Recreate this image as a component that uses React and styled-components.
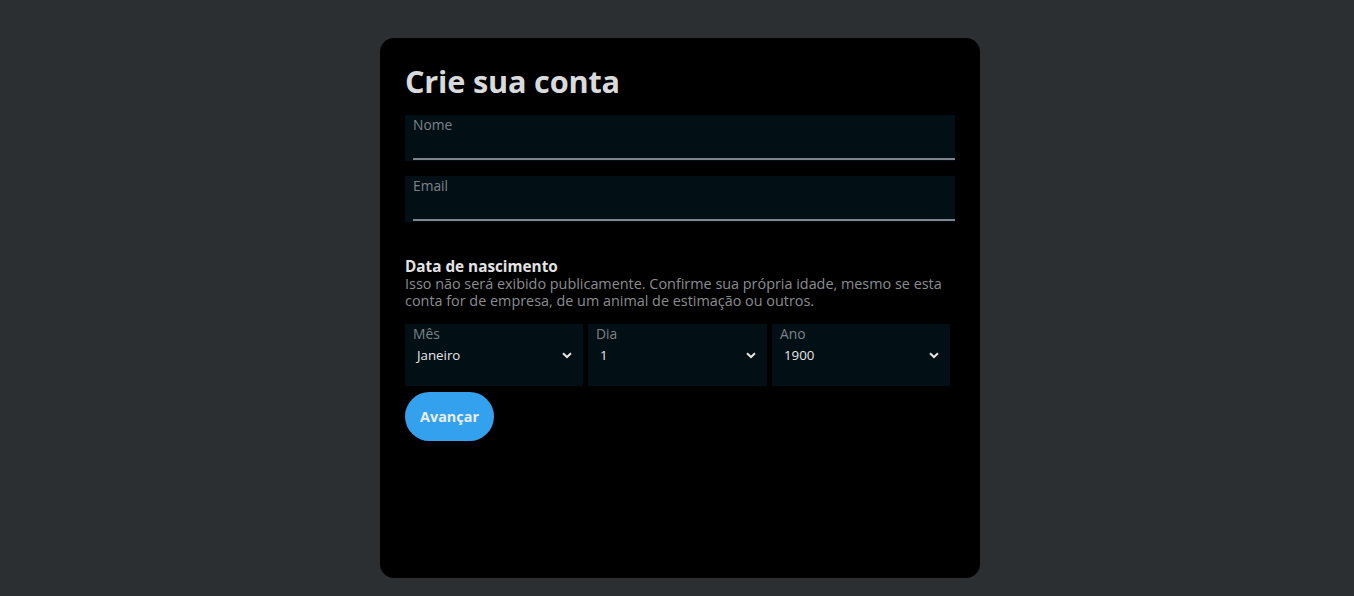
import React from 'react';
import styled, { createGlobalStyle } from 'styled-components';

const GlobalStyle = createGlobalStyle`
	* { box-sizing: border-box; }
	body {
		margin: 0;
		background: #2c2f32;
		font-family: 'Open Sans', 'Noto Sans', sans-serif;
	}
`;

const Page = styled.div`
	min-height: 596px;
	display: flex;
	justify-content: center;
	padding: 38px 0 0 6px;
`;

const Card = styled.div`
	width: 600px;
	height: 540px;
	background: #000;
	border-radius: 14px;
	padding: 20px 25px;
	display: flex;
	flex-direction: column;
`;

const Title = styled.h1`
	margin: 0 0 11px;
	font-size: 30.7px;
	line-height: 46px;
	font-weight: 700;
	color: #d9dadb;
	letter-spacing: -0.2px;
`;

const Field = styled.label`
	display: flex;
	flex-direction: column;
	width: 550px;
	height: 46px;
	background: #020f15;
	padding: 1px 0 0 8px;
	margin-bottom: ${(p) => p.$gap || 0}px;
`;

const Label = styled.span`
	font-size: 13.8px;
	line-height: 18px;
	color: #7d8388;
`;

const TextInput = styled.input`
	flex: 1;
	background: transparent;
	border: none;
	border-bottom: 2px solid #7e858c;
	margin-bottom: 3px;
	outline: none;
	color: #e5e5e5;
	font: inherit;
`;

const SectionTitle = styled.h2`
	margin: 0;
	font-size: 15.3px;
	line-height: 18px;
	font-weight: 700;
	color: #e3e3e3;
`;

const Hint = styled.p`
	margin: 0 0 15px;
	font-size: 14.4px;
	line-height: 17px;
	color: #8a8d90;
	width: 545px;
`;

const SelectRow = styled.div`
	display: grid;
	grid-template-columns: 178px 179px 178px;
	gap: 5px;
	margin-bottom: 6px;
`;

const SelectBox = styled.div`
	height: 62px;
	background: #020f15;
	padding: 1px 11px 0 8px;
	display: flex;
	flex-direction: column;
`;

const SelectValue = styled.div`
	display: flex;
	align-items: center;
	justify-content: space-between;
	padding-left: 4px;
	margin-top: 3px;
	font-size: 13.3px;
	color: #e6e6e6;
`;

const Chevron = () => (
	<svg width="10" height="7" viewBox="0 0 10 7">
		<path d="M1 1.2 L5 5 L9 1.2" fill="none" stroke="#e6e6e6" strokeWidth="2" />
	</svg>
);

const Button = styled.button`
	align-self: flex-start;
	width: 89px;
	height: 49px;
	border: none;
	border-radius: 25px;
	background: #34a1ef;
	color: #e8eef3;
	font: inherit;
	font-size: 14.4px;
	font-weight: 700;
`;

function Select({ label, value }) {
	return (
		<SelectBox>
			<Label>{label}</Label>
			<SelectValue>
				{value}
				<Chevron />
			</SelectValue>
		</SelectBox>
	);
}

export default function App() {
	return (
		<>
			<GlobalStyle />
			<Page>
				<Card>
					<Title>Crie sua conta</Title>
					<Field $gap={15}>
						<Label>Nome</Label>
						<TextInput />
					</Field>
					<Field $gap={35}>
						<Label>Email</Label>
						<TextInput />
					</Field>
					<SectionTitle>Data de nascimento</SectionTitle>
					<Hint>
						Isso não será exibido publicamente. Confirme sua própria idade, mesmo se esta
						conta for de empresa, de um animal de estimação ou outros.
					</Hint>
					<SelectRow>
						<Select label="Mês" value="Janeiro" />
						<Select label="Dia" value="1" />
						<Select label="Ano" value="1900" />
					</SelectRow>
					<Button>Avançar</Button>
				</Card>
			</Page>
		</>
	);
}
